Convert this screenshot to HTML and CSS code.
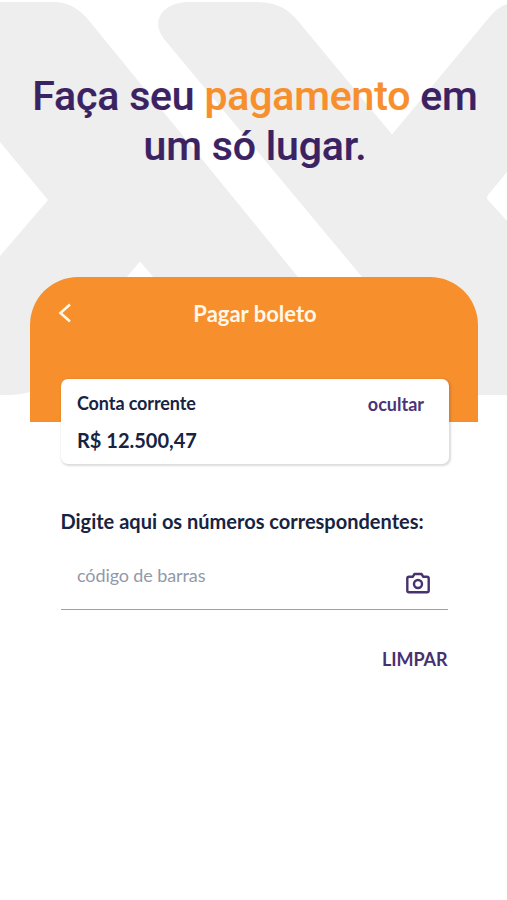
FILE: index.html
```html
<!DOCTYPE html>
<html lang="pt-BR">
<head>
<meta charset="utf-8">
<title>Pagar boleto</title>
<link rel="stylesheet" href="styles.css">
</head>
<body>
<svg class="backdrop" viewBox="0 0 507 400" aria-hidden="true">
  <path d="M0 2H53C69 2 80 9 91 23L298 277V395H170V297L140 261.500L30 392Q21 395 11 395H0V256L48 200L0 142Z"/>
  <path d="M190 2H254C273 2 286 6 298 21L392 134.500L487 20Q497 7 507 4V172L488 195Q486 198 488 200L507 221V395H460L362 277L164 39C151 23 160 2 190 2Z"/>
</svg>
<main class="page">
  <h1 class="headline">Faça seu <span class="accent">pagamento</span> em<br>um só lugar.</h1>
  <section class="screen">
    <header class="topbar">
      <svg class="back" viewBox="0 0 14 20" role="img" aria-label="Voltar"><path d="M12 1.500L2.500 10L12 18.500"/></svg>
      <h2 class="title">Pagar boleto</h2>
    </header>
    <div class="card">
      <div class="account">
        <p class="label">Conta corrente</p>
        <p class="amount">R$ 12.500,47</p>
      </div>
      <a class="toggle">ocultar</a>
    </div>
    <div class="form">
      <p class="prompt">Digite aqui os números correspondentes:</p>
      <div class="field">
        <span class="placeholder">código de barras</span>
        <svg class="camera" viewBox="0 0 24 22" role="img" aria-label="Câmera">
          <path d="M3 4.800H6.700L8.500 2H15.500L17.300 4.800H21Q22.700 4.800 22.700 6.500V18.500Q22.700 20.200 21 20.200H3Q1.300 20.200 1.300 18.500V6.500Q1.300 4.800 3 4.800Z"/>
          <circle cx="12" cy="12" r="4"/>
        </svg>
      </div>
      <a class="clear">LIMPAR</a>
    </div>
  </section>
</main>
</body>
</html>
```
FILE: styles.css
```css
* {
  box-sizing: border-box;
}

body {
  margin: 0;
  height: 900px;
  overflow: hidden;
  background: #fff;
  font-family: Lato, sans-serif;
  font-weight: 700;
  color: #172341;
}

h1, h2, p {
  margin: 0;
}

.backdrop {
  position: absolute;
  top: 0;
  left: 0;
  width: 507px;
  height: 400px;
  fill: #eee;
}

.page {
  position: relative;
  padding-top: 72px;
}

.headline {
  height: 205px;
  margin-left: 3px;
  text-align: center;
  white-space: nowrap;
  font: 500 41px/49.5px Roboto, sans-serif;
  letter-spacing: -.18px;
  color: #3b2263;
  -webkit-text-stroke: .2px currentColor;
}

.accent {
  color: #f68f2c;
}

.screen {
  width: 448px;
  margin-left: 30px;
}

.topbar {
  display: flex;
  align-items: flex-start;
  height: 145px;
  padding: 22px 28px;
  border-radius: 48px 48px 0 0;
  background: #f68f2c;
}

.back {
  width: 14px;
  height: 20px;
  margin-top: 4px;
  fill: none;
  stroke: #fff7e8;
  stroke-width: 2.6;
}

.title {
  flex: 1;
  margin-right: 12px;
  text-align: center;
  font-size: 22px;
  font-weight: 700;
  line-height: 30px;
  color: #fff7e8;
}

.card {
  display: flex;
  justify-content: space-between;
  width: 388px;
  height: 85px;
  margin: -43px 0 0 31px;
  padding: 12px 25px 0 16px;
  border-radius: 7px;
  background: #fff;
  box-shadow: 1px 1px 2px 1px rgba(60, 60, 80, .18);
}

.label {
  font-size: 18px;
  line-height: 24px;
  letter-spacing: -.1px;
}

.amount {
  margin-top: 12px;
  font-size: 20px;
  line-height: 26px;
}

.toggle {
  margin-top: 1px;
  font-size: 18px;
  line-height: 24px;
  color: #4b3477;
}

.form {
  display: flex;
  flex-direction: column;
  width: 387px;
  margin: 43px 0 0 30.5px;
}

.prompt {
  white-space: nowrap;
  font-size: 20px;
  line-height: 28px;
}

.field {
  display: flex;
  justify-content: space-between;
  height: 75px;
  padding: 28px 18px 0 16.5px;
  border-bottom: 1px solid #98a0aa;
}

.placeholder {
  font-size: 18px;
  font-weight: 400;
  line-height: 24px;
  letter-spacing: -.1px;
  color: #9299a9;
}

.camera {
  width: 24px;
  height: 22px;
  margin-top: 9px;
  fill: none;
  stroke: #48316f;
  stroke-width: 2.4;
  stroke-linejoin: round;
}

.clear {
  align-self: flex-end;
  margin-top: 36px;
  font-size: 18px;
  line-height: 26px;
  letter-spacing: -.1px;
  color: #48316f;
}
```
